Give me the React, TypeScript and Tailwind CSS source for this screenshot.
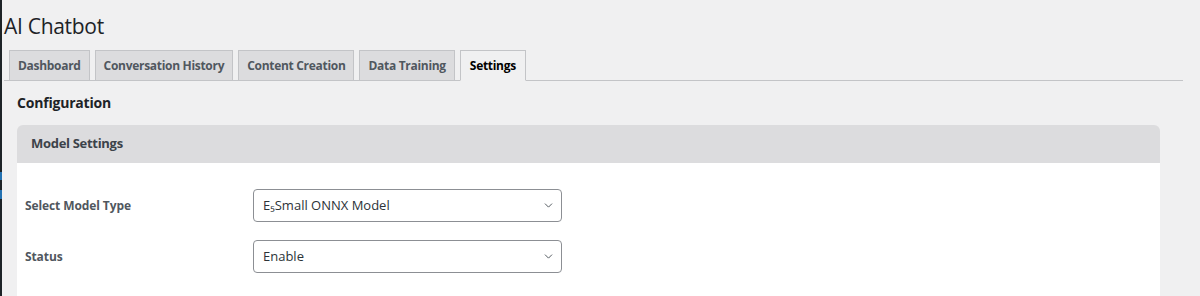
import { ChevronDown } from 'lucide-react'

const tabs = ['Dashboard', 'Conversation History', 'Content Creation', 'Data Training', 'Settings']

const SelectBox = ({ value }: { value: string }) => (
  <div className="w-[309px] h-[33px] flex items-center justify-between pl-[9px] pr-[6px] bg-white border border-[#8c8f94] rounded-[4px] text-[13px] text-[#2c3338]">
    <span>{value}</span>
    <ChevronDown size={13} strokeWidth={1.8} className="text-[#50575e]" />
  </div>
)

const App = () => {
  return (
    <div
      className="w-[1200px] h-[296px] bg-[#f0f0f1] flex overflow-hidden text-[#1d2327]"
      style={{ fontFamily: '"Open Sans", "Noto Sans", sans-serif' }}
    >
      <div className="w-[2px] h-full bg-[#1d2327] flex flex-col">
        <div className="h-[172px]" />
        <div className="h-[8px] bg-[#2271b1]" />
        <div className="h-[10px]" />
        <div className="h-[9px] bg-[#2271b1]" />
      </div>

      <div className="flex-1 pl-[2px] pr-[17px]">
        <h1 className="pt-[12px] text-[21px] leading-[28px] font-normal tracking-[-0.3px]">AI Chatbot</h1>

        <div className="mt-[10px] flex items-end gap-[5px] pl-[5px] border-b border-[#c3c4c7]">
          {tabs.map(tab =>
            tab === 'Settings' ? (
              <div
                key={tab}
                className="h-[31px] -mb-px px-[9px] flex items-center bg-[#f0f0f1] border border-[#c3c4c7] border-b-[#f0f0f1] text-[12px] font-bold text-black tracking-[-0.3px]"
              >
                {tab}
              </div>
            ) : (
              <div
                key={tab}
                className="h-[30px] px-[8px] flex items-center bg-[#dcdcde] border border-[#c3c4c7] border-b-0 text-[12px] font-bold text-[#50575e] tracking-[-0.3px]"
              >
                {tab}
              </div>
            )
          )}
        </div>

        <div className="pl-[13px] pr-[23px]">
          <h2 className="mt-[12px] text-[14px] leading-[20px] font-bold tracking-[-0.2px]">Configuration</h2>

          <div className="mt-[12px] rounded-t-[6px] overflow-hidden">
            <div className="h-[38px] bg-[#dcdcde] flex items-center px-[14px] text-[13px] font-bold text-[#3c434a] tracking-[-0.3px]">
              Model Settings
            </div>
            <div className="bg-white pt-[26px] pb-[24px] flex flex-col gap-[18px]">
              <div className="flex items-center">
                <span className="w-[236px] pl-[8px] text-[12px] font-bold text-[#50575e] tracking-[-0.1px]">Select Model Type</span>
                <SelectBox value="E₅Small ONNX Model" />
              </div>
              <div className="flex items-center">
                <span className="w-[236px] pl-[8px] text-[12px] font-bold text-[#50575e] tracking-[-0.1px]">Status</span>
                <SelectBox value="Enable" />
              </div>
            </div>
          </div>
        </div>
      </div>
    </div>
  )
}

export default App
